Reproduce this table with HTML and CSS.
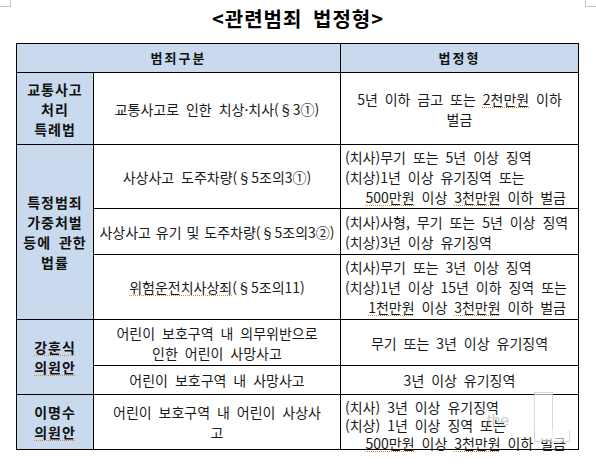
FILE: index.html
```html
<!DOCTYPE html>
<html lang="ko">
<head>
<meta charset="utf-8">
<title>관련범죄 법정형</title>
<link rel="stylesheet" href="styles.css">
</head>
<body>
<div class="page">
  <span class="mark mark-tl"></span>
  <span class="mark mark-tr"></span>
  <h1 class="title">&lt;관련범죄 법정형&gt;</h1>
  <div class="law-table">
    <div class="cell head span2"><p class="t">범죄구분</p></div>
    <div class="cell head"><p class="t">법정형</p></div>

    <div class="cell side"><p class="t">교통사고<br>처리<br>특례법</p></div>
    <div class="cell"><p class="t">교통사고로 인한 치상·치사(§3①)</p></div>
    <div class="cell"><p class="t">5년 이하 금고 또는 <span class="sp">2천만원</span> 이하<br>벌금</p></div>

    <div class="cell side span3"><p class="t">특정범죄<br>가중처벌<br>등에 관한<br>법률</p></div>
    <div class="cell"><p class="t">사상사고 도주차량(§5조의3①)</p></div>
    <div class="cell lst">
      <p class="t">(치사)무기 또는 5년 이상 징역</p>
      <p class="t">(치상)1년 이상 유기징역 또는</p>
      <p class="t r"><span class="sp">500만원</span> 이상 <span class="sp">3천만원</span> 이하 벌금</p>
    </div>

    <div class="cell tight"><p class="t">사상사고 유기 및 도주차량(§5조의3②)</p></div>
    <div class="cell lst">
      <p class="t">(치사)사형, 무기 또는 5년 이상 징역</p>
      <p class="t">(치상)3년 이상 유기징역</p>
    </div>

    <div class="cell"><p class="t"><span class="sp">위험운전치사상죄</span>(§5조의11)</p></div>
    <div class="cell lst">
      <p class="t">(치사)무기 또는 3년 이상 징역</p>
      <p class="t">(치상)1년 이상 15년 이하 징역 또는</p>
      <p class="t r"><span class="sp">1천만원</span> 이상 <span class="sp">3천만원</span> 이하 벌금</p>
    </div>

    <div class="cell side span2r"><p class="t"><span class="sp">강훈식</span><br><span class="sp">의원안</span></p></div>
    <div class="cell"><p class="t">어린이 보호구역 내 의무위반으로<br>인한 어린이 사망사고</p></div>
    <div class="cell"><p class="t">무기 또는 3년 이상 유기징역</p></div>

    <div class="cell"><p class="t">어린이 보호구역 내 사망사고</p></div>
    <div class="cell"><p class="t">3년 이상 유기징역</p></div>

    <div class="cell side"><p class="t">이명수<br><span class="sp">의원안</span></p></div>
    <div class="cell"><p class="t">어린이 보호구역 내 어린이 사상사<br>고</p></div>
    <div class="cell lst lst-tight">
      <p class="t">(치사) 3년 이상 유기징역</p>
      <p class="t">(치상) 1년 이상 징역 또는</p>
      <p class="t r"><span class="sp">500만원</span> 이상 <span class="sp">3천만원</span> 이하 벌금</p>
    </div>
  </div>
  <span class="wm-l wm-l-v"></span>
  <span class="wm-l wm-l-h"></span>
  <span class="wm-the">the</span>
</div>
</body>
</html>
```

FILE: styles.css
```css
html, body {
  margin: 0;
  padding: 0;
  background: #fff;
}

.page {
  position: relative;
  width: 596px;
  height: 470px;
  overflow: hidden;
  background: #fff;
  color: #111;
  font-family: "Noto Sans CJK KR", "Noto Sans", sans-serif;
}

.mark {
  position: absolute;
  top: 0;
  width: 10px;
  height: 6px;
  border-bottom: 1px solid #c4c4c4;
}

.mark-tl {
  left: 0;
  border-right: 1px solid #c4c4c4;
}

.mark-tr {
  right: 0;
  border-left: 1px solid #c4c4c4;
}

.title {
  margin: 0;
  height: 43px;
  box-sizing: border-box;
  padding-top: 5px;
  font-size: 20px;
  line-height: 28px;
  font-weight: 700;
  text-align: center;
  letter-spacing: 1px;
  word-spacing: 4px;
  color: #000;
}

.law-table {
  margin-left: 16px;
  width: max-content;
  display: grid;
  grid-template-columns: 76px 246px 237px;
  grid-template-rows: 28px 71px 63px 45px 64px 45px 28px 54px;
  gap: 1px;
  background: #000;
  border: 1px solid #000;
}

.cell {
  background: #fff;
  display: flex;
  flex-direction: column;
  align-items: center;
  justify-content: center;
  text-align: center;
  font-size: 14px;
  line-height: 20px;
  word-spacing: 3px;
  color: #1a1a1a;
}

.t {
  margin: 0;
}

.tight {
  word-spacing: 1px;
  white-space: nowrap;
}

.head {
  background: #c9daee;
  font-weight: 700;
  font-size: 13px;
  letter-spacing: 2px;
  color: #111;
}

.span2 {
  grid-column: span 2;
}

.side {
  background: #c9daee;
  font-weight: 700;
  font-size: 14px;
  letter-spacing: 1px;
  line-height: 20px;
  color: #111;
}

.span3 {
  grid-row: span 3;
}

.span2r {
  grid-row: span 2;
}

.lst {
  align-items: stretch;
  text-align: left;
  padding: 0 12px 0 4px;
  white-space: nowrap;
}

.lst-tight {
  line-height: 18px;
  padding-top: 6px;
}

.lst .r {
  text-align: right;
}

.sp {
  text-decoration-line: underline;
  text-decoration-style: dotted;
  text-decoration-color: #d68a35;
  text-decoration-thickness: 1px;
  text-underline-offset: 2px;
}

.wm-the {
  position: absolute;
  left: 487px;
  top: 412px;
  font-family: "Liberation Sans", Arial, sans-serif;
  font-size: 16px;
  line-height: 18px;
  color: rgba(150, 150, 150, 0.55);
}

.wm-l {
  position: absolute;
  background: rgba(255, 255, 255, 0.6);
  border: 1px solid rgba(170, 170, 170, 0.45);
}

.wm-l-v {
  left: 534px;
  top: 392px;
  width: 17px;
  height: 46px;
  border-bottom: none;
}

.wm-l-h {
  left: 534px;
  top: 430px;
  width: 34px;
  height: 11px;
  border-top: none;
}
```
